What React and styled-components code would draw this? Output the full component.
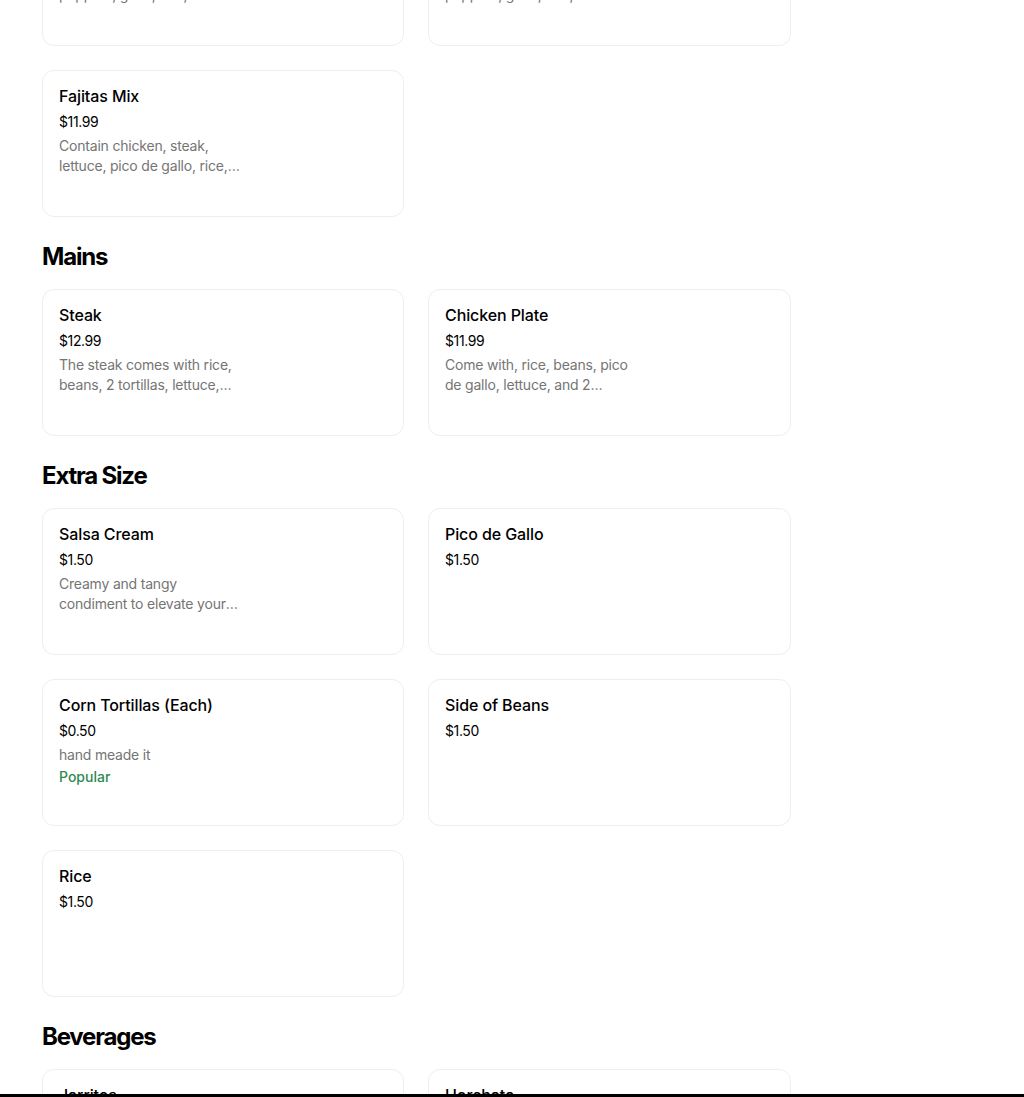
import React from 'react'
import styled, { createGlobalStyle } from 'styled-components'

const menu = [
    {
        title: null,
        items: [
            { name: 'Chicken Fajitas', price: '$10.99', desc: 'Grilled chicken with onions, peppers, guac, rice, beans and tortillas' },
            { name: 'Steak Fajitas', price: '$12.99', desc: 'Grilled steak with onions, peppers, guac, rice, beans and tortillas' },
            { name: 'Fajitas Mix', price: '$11.99', desc: 'Contain chicken, steak, lettuce, pico de gallo, rice, beans, sour cream and tortillas' },
        ],
    },
    {
        title: 'Mains',
        items: [
            { name: 'Steak', price: '$12.99', desc: 'The steak comes with rice, beans, 2 tortillas, lettuce, pico de gallo' },
            { name: 'Chicken Plate', price: '$11.99', desc: 'Come with, rice, beans, pico de gallo, lettuce, and 2 tortillas' },
        ],
    },
    {
        title: 'Extra Size',
        items: [
            { name: 'Salsa Cream', price: '$1.50', desc: 'Creamy and tangy condiment to elevate your dish' },
            { name: 'Pico de Gallo', price: '$1.50' },
            { name: 'Corn Tortillas (Each)', price: '$0.50', desc: 'hand meade it', popular: true },
            { name: 'Side of Beans', price: '$1.50' },
            { name: 'Rice', price: '$1.50' },
        ],
    },
    {
        title: 'Beverages',
        items: [
            { name: 'Jarritos', price: '$2.99' },
            { name: 'Horchata', price: '$3.50' },
        ],
    },
]

function App() {
    return (
        <>
            <GlobalStyle />
            <Viewport>
                <Content>
                    {menu.map((section, i) => (
                        <Section key={i}>
                            {section.title && <Heading>{section.title}</Heading>}
                            <Grid>
                                {section.items.map((item) => (
                                    <Card key={item.name}>
                                        <Name>{item.name}</Name>
                                        <Price>{item.price}</Price>
                                        {item.desc && <Description>{item.desc}</Description>}
                                        {item.popular && <Popular>Popular</Popular>}
                                    </Card>
                                ))}
                            </Grid>
                        </Section>
                    ))}
                </Content>
            </Viewport>
        </>
    )
}

const GlobalStyle = createGlobalStyle`
    body {
        margin: 0;
        background: #fff;
        font-family: Inter, "Noto Sans", sans-serif;
        color: #000;
    }
    * { box-sizing: border-box; }
`;

const Viewport = styled.div`
    height: 100vh;
    overflow: hidden;
    border-bottom: 3px solid #000;
`;

const Content = styled.div`
    width: 749px;
    margin: -101px 0 0 42px;
    display: flex;
    flex-direction: column;
    gap: 24px;
`;

const Section = styled.section`
    display: flex;
    flex-direction: column;
    gap: 16px;
`;

const Heading = styled.h2`
    margin: 0;
    font-size: 24px;
    line-height: 32px;
    font-weight: 700;
    letter-spacing: -1.2px;
`;

const Grid = styled.div`
    display: grid;
    grid-template-columns: 362px 1fr;
    gap: 24px;
`;

const Card = styled.div`
    height: 147px;
    border: 1px solid #eeeeee;
    border-radius: 12px;
    padding: 13px 16px 12px;
    display: flex;
    flex-direction: column;
`;

const Name = styled.div`
    font-size: 16px;
    line-height: 24px;
    font-weight: 500;
    letter-spacing: -0.1px;
`;

const Price = styled.div`
    margin-top: 4px;
    font-size: 14px;
    line-height: 20px;
    letter-spacing: -0.4px;
`;

const Description = styled.div`
    margin-top: 4px;
    width: 184px;
    font-size: 14px;
    line-height: 20px;
    letter-spacing: -0.2px;
    color: #757575;
    display: -webkit-box;
    -webkit-line-clamp: 2;
    -webkit-box-orient: vertical;
    overflow: hidden;
`;

const Popular = styled.div`
    margin-top: 2px;
    font-size: 14px;
    line-height: 20px;
    font-weight: 500;
    color: #2f8a52;
`;

export default App
